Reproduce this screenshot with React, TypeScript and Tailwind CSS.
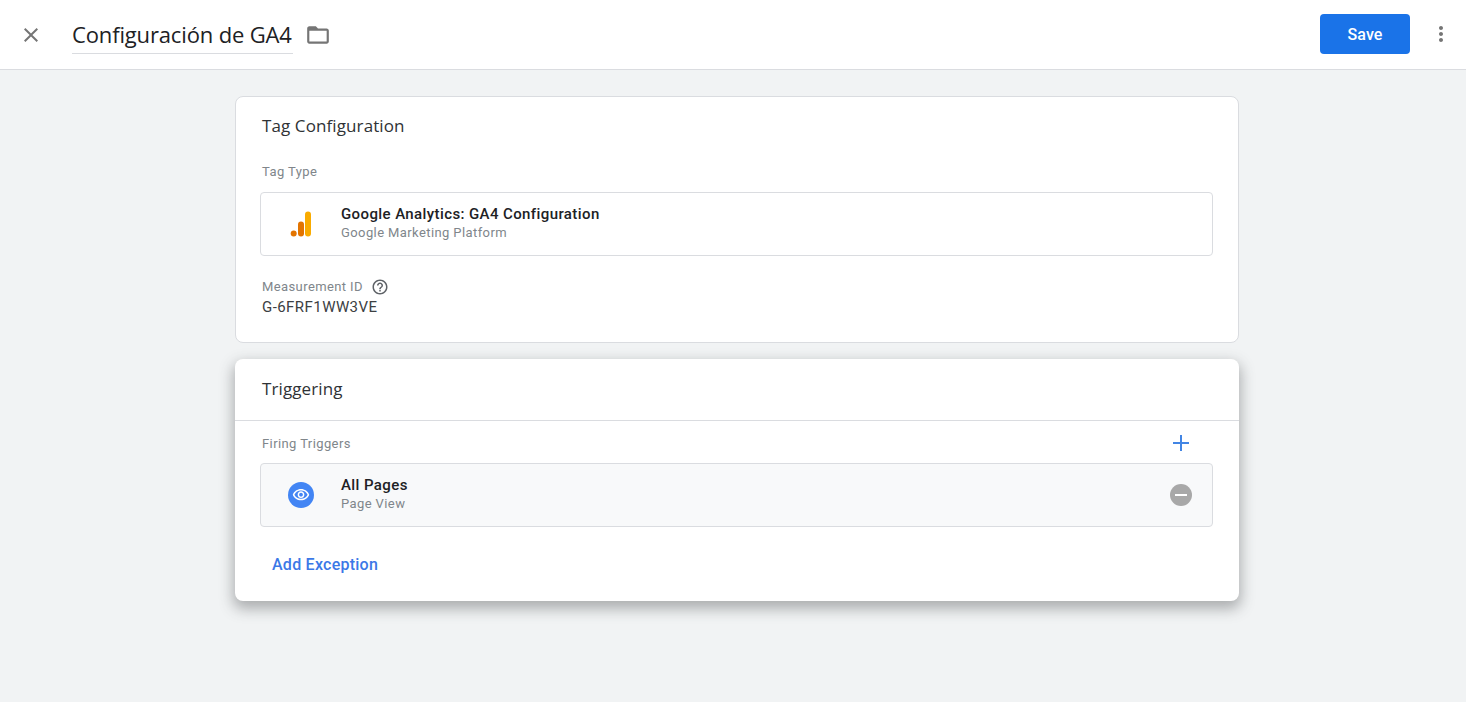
import React from 'react';

const sans = "font-['Roboto',sans-serif]";
const display = "font-['Open_Sans',sans-serif]";

function TagHeader() {
    return (
        <header className="h-[70px] bg-white border-b border-[#dadce0] flex items-center">
            <button className="w-6 h-6 ml-[19px] text-[#757575]">
                <svg viewBox="0 0 24 24" className="w-6 h-6" fill="currentColor">
                    <path d="M19 6.41 17.59 5 12 10.59 6.41 5 5 6.41 10.59 12 5 17.59 6.41 19 12 13.41 17.59 19 19 17.59 13.41 12z" />
                </svg>
            </button>
            <div className={`ml-[29px] w-[221px] h-[38px] mt-[1px] border-b border-[#dadce0] text-[22px] leading-[37px] text-[#202124] tracking-[-0.15px] whitespace-nowrap ${display}`}>
                Configuración de GA4
            </div>
            <svg viewBox="0 0 24 24" className="w-[26px] h-[26px] ml-[12px] text-[#757575]" fill="currentColor">
                <path d="M20 6h-8l-2-2H4c-1.100 0-1.990.9-1.990 2L2 18c0 1.100.9 2 2 2h16c1.100 0 2-.9 2-2V8c0-1.100-.9-2-2-2zm0 12H4V8h16v10z" />
            </svg>
            <button className={`ml-auto -mt-[1px] pt-[2px] w-[90px] h-10 rounded bg-[#1a73e8] text-white text-[16px] tracking-[0.1px] font-medium ${sans}`}>
                Save
            </button>
            <svg viewBox="0 0 24 24" className="w-6 h-6 -mt-[1px] ml-[19px] mr-[13px] text-[#757575]" fill="currentColor">
                <path d="M12 8c1.100 0 2-.9 2-2s-.9-2-2-2-2 .9-2 2 .9 2 2 2zm0 2c-1.100 0-2 .9-2 2s.9 2 2 2 2-.9 2-2-.9-2-2-2zm0 6c-1.100 0-2 .9-2 2s.9 2 2 2 2-.9 2-2-.9-2-2-2z" />
            </svg>
        </header>
    );
}

function RowCard({ icon, title, subtitle, right, muted }: any) {
    return (
        <div className={`h-16 rounded border border-[#dadce0] flex items-center ${muted ? 'bg-[#f8f9fa]' : 'bg-white'}`}>
            <div className="w-[80px] flex justify-center shrink-0">{icon}</div>
            <div className={`pb-[2px] tracking-[0.4px] ${sans}`}>
                <div className="text-[15px] leading-[19px] font-medium text-[#202124]">{title}</div>
                <div className="text-[13px] leading-[17px] text-[#80868b]">{subtitle}</div>
            </div>
            {right}
        </div>
    );
}

function AnalyticsIcon() {
    return (
        <svg viewBox="0 0 22 26" className="w-[22px] h-[26px] -mt-[1px]">
            <rect x="15" y="0.5" width="6" height="25" rx="3" fill="#f9ab00" />
            <rect x="8" y="10.5" width="6" height="15" rx="3" fill="#e37400" />
            <circle cx="3.7" cy="22.5" r="3" fill="#e37400" />
        </svg>
    );
}

function EyeIcon() {
    return (
        <div className="w-[26px] h-[26px] rounded-full bg-[#4285f4] flex items-center justify-center">
            <svg viewBox="0 0 24 24" className="w-[18px] h-[18px]" fill="#fff">
                <path d="M12 6c3.790 0 7.170 2.130 8.820 5.500-1.650 3.370-5.020 5.500-8.820 5.500s-7.170-2.130-8.820-5.500C4.830 8.130 8.210 6 12 6m0-2C7 4 2.730 7.110 1 11.500 2.730 15.890 7 19 12 19s9.270-3.110 11-7.500C21.270 7.110 17 4 12 4zm0 5c1.380 0 2.500 1.120 2.500 2.500S13.380 14 12 14s-2.500-1.120-2.500-2.500S10.620 9 12 9m0-2c-2.480 0-4.500 2.020-4.500 4.500S9.520 16 12 16s4.500-2.020 4.500-4.500S14.480 7 12 7z" />
            </svg>
        </div>
    );
}

export default function App() {
    return (
        <div className="h-[702px] bg-[#f1f3f4] overflow-hidden flex flex-col">
            <TagHeader />

            <main className="w-[1004px] ml-[235px] mt-[26px] flex flex-col gap-4">
                {/* Tag Configuration */}
                <section className="h-[247px] bg-white rounded-lg border border-[#dadce0] pl-[24px] pr-[25px]">
                    <h2 className={`pl-[2px] pt-[17px] text-[17px] leading-6 text-[#2f3235] tracking-[0.1px] ${display}`}>Tag Configuration</h2>
                    <div className={`pl-[2px] mt-[26px] mb-[12px] text-[13px] leading-4 tracking-[0.4px] text-[#80868b] ${sans}`}>Tag Type</div>
                    <RowCard
                        icon={<AnalyticsIcon />}
                        title="Google Analytics: GA4 Configuration"
                        subtitle="Google Marketing Platform"
                    />
                    <div className={`pl-[2px] mt-[22px] flex items-center gap-[8px] text-[13px] leading-4 tracking-[0.4px] text-[#80868b] ${sans}`}>
                        Measurement ID
                        <svg viewBox="0 0 24 24" className="w-[18px] h-[18px] text-[#5f6368]" fill="currentColor">
                            <path d="M11 18h2v-2h-2v2zm1-16C6.480 2 2 6.480 2 12s4.480 10 10 10 10-4.480 10-10S17.520 2 12 2zm0 18c-4.410 0-8-3.590-8-8s3.590-8 8-8 8 3.590 8 8-3.590 8-8 8zm0-14c-2.210 0-4 1.790-4 4h2c0-1.100.9-2 2-2s2 .9 2 2c0 2-3 1.750-3 5h2c0-2.250 3-2.500 3-5 0-2.210-1.790-4-4-4z" />
                        </svg>
                    </div>
                    <div className={`pl-[2px] mt-[1px] text-[15px] leading-5 tracking-[0.44px] text-[#3c4043] ${sans}`}>G-6FRF1WW3VE</div>
                </section>

                {/* Triggering */}
                <section className="h-[242px] bg-white rounded-lg shadow-[0_6px_14px_2px_rgba(60,64,67,0.38)]">
                    <h2 className={`h-[62px] border-b border-[#dadce0] pl-[27px] pt-[18px] text-[17px] leading-6 text-[#2f3235] tracking-[0.1px] ${display}`}>Triggering</h2>
                    <div className="pl-[25px] pr-[26px]">
                        <div className="h-[42px] flex items-center justify-between">
                            <span className={`pl-[2px] pt-[4px] text-[13px] tracking-[0.4px] text-[#80868b] ${sans}`}>Firing Triggers</span>
                            <svg viewBox="0 0 24 24" className="w-6 h-6 mt-[2px] mr-[20px] text-[#4285e4]" fill="currentColor">
                                <path d="M20 13h-7v7h-2v-7H4v-2h7V4h2v7h7z" />
                            </svg>
                        </div>
                        <RowCard
                            muted
                            icon={<EyeIcon />}
                            title="All Pages"
                            subtitle="Page View"
                            right={
                                <div className="ml-auto mr-[20px] w-[22px] h-[22px] rounded-full bg-[#a8a8a8] flex items-center justify-center">
                                    <div className="w-3 h-[2px] bg-white" />
                                </div>
                            }
                        />
                        <button className={`block ml-[12px] mt-[28px] text-[16px] leading-5 font-medium tracking-[0.25px] text-[#3b78e7] ${sans}`}>
                            Add Exception
                        </button>
                    </div>
                </section>
            </main>
        </div>
    );
}
